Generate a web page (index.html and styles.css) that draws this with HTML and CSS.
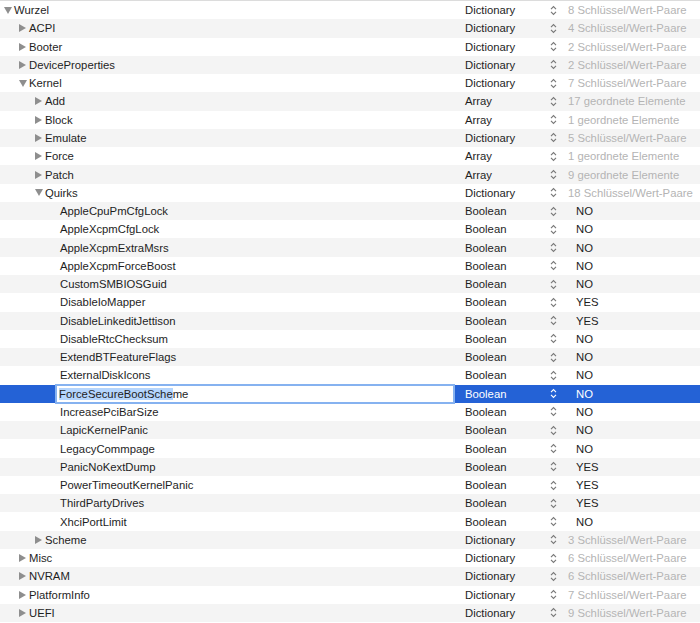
FILE: index.html
```html
<!DOCTYPE html>
<html lang="de">
<head>
    <meta charset="UTF-8">
    <title>config.plist</title>
    <link rel="stylesheet" href="styles.css">
</head>
<body>
    <svg width="0" height="0" class="defs">
        <symbol id="step" viewBox="0 0 7 11">
            <path d="M1 4.2 L3.5 1.6 L6 4.2 M1 6.8 L3.5 9.4 L6 6.8" fill="none" stroke="currentColor" stroke-width="1.1"/>
        </symbol>
    </svg>

    <div class="outline">
        <div class="row"><div class="key lv0"><span class="tri open"></span>Wurzel</div><div class="type">Dictionary</div><div class="val"><svg class="step"><use href="#step"/></svg><span class="info">8 Schlüssel/Wert-Paare</span></div></div>
        <div class="row"><div class="key lv1"><span class="tri"></span>ACPI</div><div class="type">Dictionary</div><div class="val"><svg class="step"><use href="#step"/></svg><span class="info">4 Schlüssel/Wert-Paare</span></div></div>
        <div class="row"><div class="key lv1"><span class="tri"></span>Booter</div><div class="type">Dictionary</div><div class="val"><svg class="step"><use href="#step"/></svg><span class="info">2 Schlüssel/Wert-Paare</span></div></div>
        <div class="row"><div class="key lv1"><span class="tri"></span>DeviceProperties</div><div class="type">Dictionary</div><div class="val"><svg class="step"><use href="#step"/></svg><span class="info">2 Schlüssel/Wert-Paare</span></div></div>
        <div class="row"><div class="key lv1"><span class="tri open"></span>Kernel</div><div class="type">Dictionary</div><div class="val"><svg class="step"><use href="#step"/></svg><span class="info">7 Schlüssel/Wert-Paare</span></div></div>
        <div class="row"><div class="key lv2"><span class="tri"></span>Add</div><div class="type">Array</div><div class="val"><svg class="step"><use href="#step"/></svg><span class="info">17 geordnete Elemente</span></div></div>
        <div class="row"><div class="key lv2"><span class="tri"></span>Block</div><div class="type">Array</div><div class="val"><svg class="step"><use href="#step"/></svg><span class="info">1 geordnete Elemente</span></div></div>
        <div class="row"><div class="key lv2"><span class="tri"></span>Emulate</div><div class="type">Dictionary</div><div class="val"><svg class="step"><use href="#step"/></svg><span class="info">5 Schlüssel/Wert-Paare</span></div></div>
        <div class="row"><div class="key lv2"><span class="tri"></span>Force</div><div class="type">Array</div><div class="val"><svg class="step"><use href="#step"/></svg><span class="info">1 geordnete Elemente</span></div></div>
        <div class="row"><div class="key lv2"><span class="tri"></span>Patch</div><div class="type">Array</div><div class="val"><svg class="step"><use href="#step"/></svg><span class="info">9 geordnete Elemente</span></div></div>
        <div class="row"><div class="key lv2"><span class="tri open"></span>Quirks</div><div class="type">Dictionary</div><div class="val"><svg class="step"><use href="#step"/></svg><span class="info">18 Schlüssel/Wert-Paare</span></div></div>
        <div class="row"><div class="key lv3">AppleCpuPmCfgLock</div><div class="type">Boolean</div><div class="val"><svg class="step"><use href="#step"/></svg><span class="bool">NO</span></div></div>
        <div class="row"><div class="key lv3">AppleXcpmCfgLock</div><div class="type">Boolean</div><div class="val"><svg class="step"><use href="#step"/></svg><span class="bool">NO</span></div></div>
        <div class="row"><div class="key lv3">AppleXcpmExtraMsrs</div><div class="type">Boolean</div><div class="val"><svg class="step"><use href="#step"/></svg><span class="bool">NO</span></div></div>
        <div class="row"><div class="key lv3">AppleXcpmForceBoost</div><div class="type">Boolean</div><div class="val"><svg class="step"><use href="#step"/></svg><span class="bool">NO</span></div></div>
        <div class="row"><div class="key lv3">CustomSMBIOSGuid</div><div class="type">Boolean</div><div class="val"><svg class="step"><use href="#step"/></svg><span class="bool">NO</span></div></div>
        <div class="row"><div class="key lv3">DisableIoMapper</div><div class="type">Boolean</div><div class="val"><svg class="step"><use href="#step"/></svg><span class="bool">YES</span></div></div>
        <div class="row"><div class="key lv3">DisableLinkeditJettison</div><div class="type">Boolean</div><div class="val"><svg class="step"><use href="#step"/></svg><span class="bool">YES</span></div></div>
        <div class="row"><div class="key lv3">DisableRtcChecksum</div><div class="type">Boolean</div><div class="val"><svg class="step"><use href="#step"/></svg><span class="bool">NO</span></div></div>
        <div class="row"><div class="key lv3">ExtendBTFeatureFlags</div><div class="type">Boolean</div><div class="val"><svg class="step"><use href="#step"/></svg><span class="bool">NO</span></div></div>
        <div class="row"><div class="key lv3">ExternalDiskIcons</div><div class="type">Boolean</div><div class="val"><svg class="step"><use href="#step"/></svg><span class="bool">NO</span></div></div>
        <div class="row selected"><div class="key lv3 editing"><div class="edit"><span class="sel">ForceSecureBootSche</span>me</div></div><div class="type">Boolean</div><div class="val"><svg class="step"><use href="#step"/></svg><span class="bool">NO</span></div></div>
        <div class="row"><div class="key lv3">IncreasePciBarSize</div><div class="type">Boolean</div><div class="val"><svg class="step"><use href="#step"/></svg><span class="bool">NO</span></div></div>
        <div class="row"><div class="key lv3">LapicKernelPanic</div><div class="type">Boolean</div><div class="val"><svg class="step"><use href="#step"/></svg><span class="bool">NO</span></div></div>
        <div class="row"><div class="key lv3">LegacyCommpage</div><div class="type">Boolean</div><div class="val"><svg class="step"><use href="#step"/></svg><span class="bool">NO</span></div></div>
        <div class="row"><div class="key lv3">PanicNoKextDump</div><div class="type">Boolean</div><div class="val"><svg class="step"><use href="#step"/></svg><span class="bool">YES</span></div></div>
        <div class="row"><div class="key lv3">PowerTimeoutKernelPanic</div><div class="type">Boolean</div><div class="val"><svg class="step"><use href="#step"/></svg><span class="bool">YES</span></div></div>
        <div class="row"><div class="key lv3">ThirdPartyDrives</div><div class="type">Boolean</div><div class="val"><svg class="step"><use href="#step"/></svg><span class="bool">YES</span></div></div>
        <div class="row"><div class="key lv3">XhciPortLimit</div><div class="type">Boolean</div><div class="val"><svg class="step"><use href="#step"/></svg><span class="bool">NO</span></div></div>
        <div class="row"><div class="key lv2"><span class="tri"></span>Scheme</div><div class="type">Dictionary</div><div class="val"><svg class="step"><use href="#step"/></svg><span class="info">3 Schlüssel/Wert-Paare</span></div></div>
        <div class="row"><div class="key lv1"><span class="tri"></span>Misc</div><div class="type">Dictionary</div><div class="val"><svg class="step"><use href="#step"/></svg><span class="info">6 Schlüssel/Wert-Paare</span></div></div>
        <div class="row"><div class="key lv1"><span class="tri"></span>NVRAM</div><div class="type">Dictionary</div><div class="val"><svg class="step"><use href="#step"/></svg><span class="info">6 Schlüssel/Wert-Paare</span></div></div>
        <div class="row"><div class="key lv1"><span class="tri"></span>PlatformInfo</div><div class="type">Dictionary</div><div class="val"><svg class="step"><use href="#step"/></svg><span class="info">7 Schlüssel/Wert-Paare</span></div></div>
        <div class="row"><div class="key lv1"><span class="tri"></span>UEFI</div><div class="type">Dictionary</div><div class="val"><svg class="step"><use href="#step"/></svg><span class="info">9 Schlüssel/Wert-Paare</span></div></div>
    </div>
</body>
</html>
```

FILE: styles.css
```css
/* Plist outline view */
body {
    margin: 0;
    padding: 0;
    background-color: #fff;
    font-family: "Liberation Sans", Arial, sans-serif;
    font-size: 11.3px;
    color: #1e1e1e;
}

.defs {
    position: absolute;
}

.outline {
    border-top: 1px solid #dcdcdc;
}

.row {
    display: grid;
    grid-template-columns: 456px 92px 1fr;
    align-items: center;
    height: 18.27px;
    line-height: 18px;
    white-space: nowrap;
}

.row:nth-child(even) {
    background-color: #f4f4f4;
}

/* Key column with disclosure triangles */
.key {
    display: flex;
    align-items: center;
}

.lv0 { padding-left: 4px; }
.lv1 { padding-left: 19px; }
.lv2 { padding-left: 35px; }
.lv3 { padding-left: 60px; }

.tri {
    width: 0;
    height: 0;
    margin-right: 3px;
    border-left: 7px solid #8e8e8e;
    border-top: 4px solid transparent;
    border-bottom: 4px solid transparent;
}

.tri.open {
    border-left: 4px solid transparent;
    border-right: 4px solid transparent;
    border-top: 7px solid #8e8e8e;
    border-bottom: 0;
    margin-right: 2px;
}

.type {
    padding-left: 9px;
}

.val {
    display: flex;
    align-items: center;
    padding-left: 2px;
}

.step {
    width: 7px;
    height: 11px;
    color: #777;
}

.info {
    margin-left: 11px;
    color: #b4b4b4;
}

.bool {
    margin-left: 19px;
}

/* Selected row being edited */
.row.selected {
    background-color: #2462d6;
    color: #fff;
}

.row.selected .step {
    color: #fff;
}

.key.editing {
    padding-left: 57px;
    padding-right: 3px;
}

.edit {
    flex: 1;
    height: 16px;
    line-height: 16px;
    padding-left: 2px;
    background-color: #fff;
    color: #1e1e1e;
    box-shadow: 0 0 0 2px #86b2f0;
}

.sel {
    background-color: #b5d5fd;
}
```
